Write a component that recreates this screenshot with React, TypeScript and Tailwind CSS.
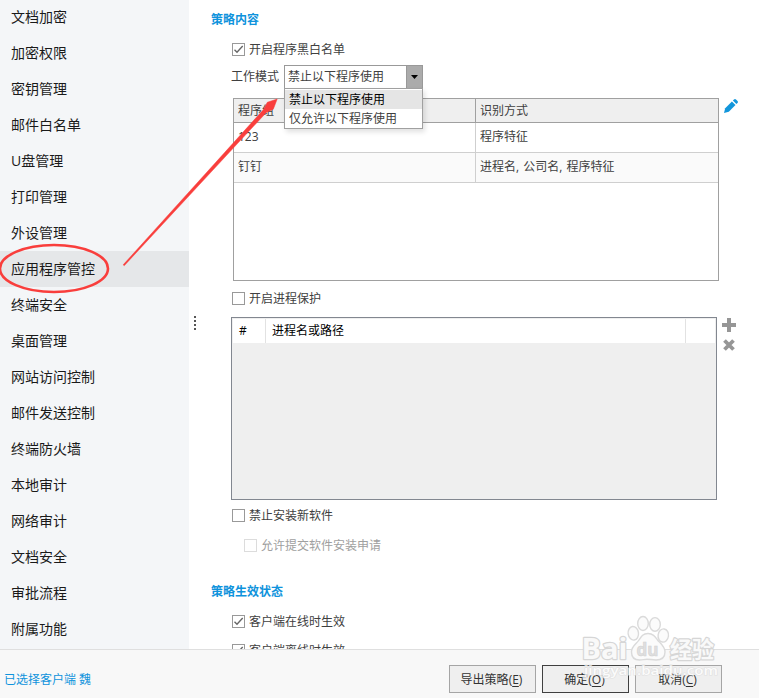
import * as React from "react";

const NAV_ITEMS = [
  "文档加密",
  "加密权限",
  "密钥管理",
  "邮件白名单",
  "U盘管理",
  "打印管理",
  "外设管理",
  "应用程序管控",
  "终端安全",
  "桌面管理",
  "网站访问控制",
  "邮件发送控制",
  "终端防火墙",
  "本地审计",
  "网络审计",
  "文档安全",
  "审批流程",
  "附属功能",
];

const MODES = ["禁止以下程序使用", "仅允许以下程序使用"];

function Checkbox({
  label,
  checked = false,
  disabled = false,
  className = "",
}: {
  label: string;
  checked?: boolean;
  disabled?: boolean;
  className?: string;
}) {
  return (
    <div className={"flex h-[13px] shrink-0 items-center gap-1 " + className}>
      <span
        className={
          "flex size-[13px] shrink-0 items-center justify-center border bg-white " +
          (disabled ? "border-[#dcdcdc]" : "border-[#999999]")
        }
      >
        {checked && (
          <svg width="11" height="11" viewBox="0 0 11 11" fill="none">
            <path d="M1.5 5.7 4 8.2 9.7 2" stroke="#666" strokeWidth="1.4" />
          </svg>
        )}
      </span>
      <span className={disabled ? "text-[#a0a0a0]" : "text-[#404040]"}>{label}</span>
    </div>
  );
}

function SectionTitle({ children, className = "" }: { children: string; className?: string }) {
  return (
    <h2
      className={
        "flex h-[13px] shrink-0 items-center font-bold text-[#0f93dc] " + className
      }
    >
      {children}
    </h2>
  );
}

function FooterButton({
  label,
  hotkey,
  primary = false,
}: {
  label: string;
  hotkey: string;
  primary?: boolean;
}) {
  return (
    <button
      type="button"
      className={
        "h-7 w-[87px] border bg-[#efefef] pt-px pr-0.5 text-[#333333] " +
        (primary ? "border-[#404040]" : "border-[#a5a5a5]")
      }
    >
      {label}(<span className="underline underline-offset-2">{hotkey}</span>)
    </button>
  );
}

function Annotation() {
  return (
    <svg
      className="pointer-events-none absolute top-0 left-0"
      width="300"
      height="300"
      viewBox="0 0 300 300"
    >
      <ellipse cx="54" cy="268.500" rx="54" ry="23.500" fill="none" stroke="#f93e3c" strokeWidth="2.6" />
      <path
        d="M123.2 264.8 263.5 109.5 267.3 102.300 277.200 99 273.300 109.200 266.300 112.500 124.200 265.700Z"
        fill="#f93e3c"
        stroke="#f93e3c"
        strokeWidth="0.5"
      />
    </svg>
  );
}

function Watermark() {
  return (
    <svg
      className="pointer-events-none absolute top-[610px] left-[578px]"
      width="145"
      height="72"
      viewBox="0 0 145 72"
      fontFamily="'Open Sans', 'Noto Sans CJK SC', sans-serif"
      fontWeight="700"
    >
      <g fill="#fbfbfb" stroke="#dadada" strokeWidth="1.4">
        <ellipse cx="55.300" cy="23.300" rx="5.200" ry="6.800" transform="rotate(-8 55.300 23.300)" />
        <ellipse cx="65" cy="13.500" rx="5.300" ry="7" />
        <ellipse cx="77" cy="14.400" rx="5.300" ry="6.800" />
        <ellipse cx="85.300" cy="25.500" rx="5.200" ry="6.600" transform="rotate(8 85.300 25.500)" />
        <path d="M70 23.500c5 0 7 3 9.500 6.500 2.500 3 7.500 6.500 7.500 12 0 6-4 8-9 8-4 0-6-.8-9-.8s-4 .8-7.500.8c-5 0-8-3-8-8 0-6 5-8 7.500-12 2.500-4 4-6.500 9-6.500Z" />
      </g>
      <g fill="#f9f9f9" stroke="#d6d6d6" strokeWidth="2.400" strokeLinejoin="round" paintOrder="stroke">
        <text x="3.500" y="48.500" fontSize="29" textLength="46" lengthAdjust="spacingAndGlyphs">
          Bai
        </text>
        <text x="92" y="47.500" fontSize="23" textLength="44" lengthAdjust="spacingAndGlyphs">
          经验
        </text>
      </g>
      <text x="58.500" y="45.500" fontSize="18" textLength="22" lengthAdjust="spacingAndGlyphs" fill="#e0e0e0" stroke="#d2d2d2" strokeWidth="0.6">
        du
      </text>
      <text
        x="6"
        y="65"
        fontSize="13"
        fontWeight="600"
        textLength="134"
        lengthAdjust="spacingAndGlyphs"
        fill="#ffffff"
        stroke="#dcdcdc"
        strokeWidth="1.200"
        paintOrder="stroke"
        opacity="0.75"
      >
        jingyan.baidu.com
      </text>
    </svg>
  );
}

export default function App() {
  const [active, setActive] = React.useState("应用程序管控");
  const [mode, setMode] = React.useState(MODES[0]);

  return (
    <div className="relative flex h-[698px] w-[759px] flex-col overflow-hidden bg-white font-['Open_Sans','Noto_Sans_CJK_SC',sans-serif] text-xs leading-none">
      <div className="flex h-[649px] shrink-0 overflow-hidden">
        <nav className="-mt-px w-[189px] shrink-0 bg-[#f4f6f8] text-sm">
          {NAV_ITEMS.map((item) => (
            <div
              key={item}
              onClick={() => setActive(item)}
              className={
                "flex h-9 items-center pl-[11px] text-[#1a1a1a] " +
                (item === active ? "bg-[#e5e7e9]" : "")
              }
            >
              {item}
            </div>
          ))}
        </nav>

        <div className="flex w-[22px] shrink-0 flex-col gap-0.5 pt-[316px] pl-[5px]">
          <i className="size-0.5 bg-[#555555]" />
          <i className="size-0.5 bg-[#555555]" />
          <i className="size-0.5 bg-[#555555]" />
          <i className="size-0.5 bg-[#555555]" />
        </div>

        <main className="flex flex-1 flex-col pt-[13px] text-[#404040]">
          <SectionTitle>策略内容</SectionTitle>
          <Checkbox label="开启程序黑白名单" checked className="mt-[17px] ml-[21px]" />

          <div className="mt-[9px] ml-5 flex h-6 shrink-0 items-center">
            <span className="w-[53px]">工作模式</span>
            <div className="relative h-6 w-[139px]">
              <div className="flex h-6 border border-[#999999] bg-white">
                <span className="flex flex-1 items-center pl-[3px]">{mode}</span>
                <span className="flex w-4 items-center justify-center border-l border-[#999999] bg-[#ababab]">
                  <svg width="7" height="4" viewBox="0 0 7 4">
                    <path d="M0 0h7L3.500 4Z" fill="#000" />
                  </svg>
                </span>
              </div>
              <ul className="absolute top-[23px] left-0 z-10 h-[41px] w-[139px] border border-[#a0a0a0] bg-white shadow-[2px_3px_5px_rgba(0,0,0,0.12)]">
                {MODES.map((m) => (
                  <li
                    key={m}
                    onClick={() => setMode(m)}
                    className={
                      "flex h-[19px] items-center pl-1 " +
                      (m === mode ? "mt-px bg-[#e5e5e5] text-black" : "")
                    }
                  >
                    {m}
                  </li>
                ))}
              </ul>
            </div>
          </div>

          <div className="mt-[9px] ml-[22px] flex h-[183px] shrink-0 items-start">
            <div className="h-[183px] w-[486px] border border-[#a0a0a0]">
              <div className="flex h-6 border-b border-[#a0a0a0] bg-[#efefef]">
                <span className="flex w-[242px] items-center border-r border-[#a0a0a0] pl-1">程序组</span>
                <span className="flex items-center pl-1">识别方式</span>
              </div>
              <div className="flex h-[30px] border-b border-[#cfcfcf] pb-0.5">
                <span className="-mb-0.5 flex w-[242px] items-center border-r border-[#cfcfcf] pb-0.5 pl-1">123</span>
                <span className="flex items-center pl-1">程序特征</span>
              </div>
              <div className="flex h-[30px] border-b border-[#cfcfcf] bg-[#fafafa] pb-0.5">
                <span className="-mb-0.5 flex w-[242px] items-center border-r border-[#cfcfcf] pb-0.5 pl-1">钉钉</span>
                <span className="flex items-center pl-1 [word-spacing:1px]">进程名, 公司名, 程序特征</span>
              </div>
            </div>
            <svg className="mt-px ml-[5px]" width="14" height="14" viewBox="0 0 14 14" fill="#1296db">
              <path d="M0 14 1.200 9.200 7.900 2.500 11.500 6.100 4.800 12.800Z" />
              <path d="M8.900 1.600 10 .5q1-.9 2 0l1.500 1.500q.9 1 0 2L12.400 5.100Z" />
            </svg>
          </div>

          <Checkbox label="开启进程保护" className="mt-[11px] ml-[21px]" />

          <div className="mt-3 ml-5 flex h-[183px] shrink-0 items-start">
            <div className="h-[183px] w-[486px] border border-[#828790] bg-[#efefef] p-px">
              <div className="flex h-6 bg-white text-black">
                <span className="flex w-[33px] items-center border-r border-[#e2e2e2] pl-1.5">#</span>
                <span className="flex w-[420px] items-center border-r border-[#e2e2e2] pl-1.5">进程名或路径</span>
              </div>
            </div>
            <div className="ml-[5px] flex flex-col gap-[7px] pt-px">
              <svg width="14" height="14" viewBox="0 0 14 14" fill="#969696">
                <path d="M5 0h4v5h5v4H9v5H5V9H0V5h5Z" />
              </svg>
              <svg className="ml-px" width="12" height="12" viewBox="0 0 12 12">
                <path d="m1.500 1.500 9 9m0-9-9 9" stroke="#969696" strokeWidth="3.800" />
              </svg>
            </div>
          </div>

          <Checkbox label="禁止安装新软件" className="mt-[9px] ml-[21px]" />
          <Checkbox label="允许提交软件安装申请" disabled className="mt-[17px] ml-[33px]" />

          <SectionTitle className="mt-[33px]">策略生效状态</SectionTitle>
          <Checkbox label="客户端在线时生效" checked className="mt-[17px] ml-[21px]" />
          <Checkbox label="客户端离线时生效" checked className="mt-4 ml-[21px]" />
        </main>
      </div>

      <footer className="relative flex h-[49px] shrink-0 items-start border-t border-[#dfdfdf] bg-[#f8f8f8] pt-[15px] pl-1">
        <span className="mt-[9px] w-[445px] text-[#0f93dc]">已选择客户端 魏</span>
        <div className="flex gap-1.5">
          <FooterButton label="导出策略" hotkey="E" />
          <FooterButton label="确定" hotkey="O" primary />
          <FooterButton label="取消" hotkey="C" />
        </div>
      </footer>

      <Watermark />
      <Annotation />
    </div>
  );
}
